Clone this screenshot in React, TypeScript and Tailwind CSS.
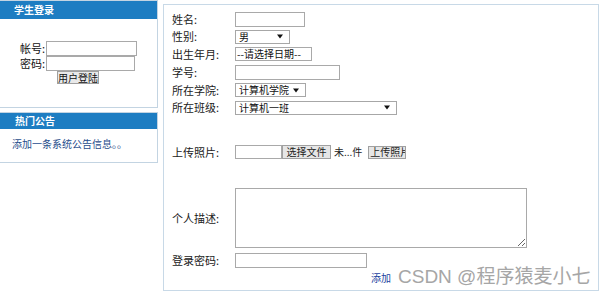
import React from "react";

const cjk = "font-['Noto_Sans_CJK_SC','Noto_Sans',sans-serif]";

const Arrow = () => (
  <svg width="6" height="5" viewBox="0 0 6 5" className="shrink-0">
    <path d="M0 0.5h6L3 4.5z" fill="#111" />
  </svg>
);

const FakeSelect = ({ text, w, h }: { text: string; w: string; h: string }) => (
  <div
    className={`${w} ${h} flex items-center justify-between border border-[#a7a7a7] bg-white pl-[3px] pr-[6px] text-[10px] leading-none text-[#111]`}
  >
    <span>{text}</span>
    <Arrow />
  </div>
);

const Row = ({
  label,
  h,
  children,
}: {
  label: string;
  h: string;
  children?: React.ReactNode;
}) => (
  <div className={`flex items-center ${h}`}>
    <div className="w-[63px] shrink-0 text-[11px] leading-none text-[#222]">{label}</div>
    {children}
  </div>
);

const LoginBox = () => (
  <div className="h-[108px] border-y border-r border-[#c3d4e2] bg-white">
    <div className="h-[18px] bg-[#1d7dc2] pl-[14px] text-[10px] font-bold leading-[18px] text-white">
      学生登录
    </div>
    <div className="flex flex-col pt-[22px]">
      <div className="flex h-[15px] items-center">
        <span className="w-[46px] pr-[1px] text-right text-[11px] leading-none">帐号:</span>
        <input className="h-[15px] w-[91px] border border-[#a9a9a9] bg-white" />
      </div>
      <div className="flex h-[15px] items-center">
        <span className="w-[46px] pr-[1px] text-right text-[11px] leading-none">密码:</span>
        <input type="password" className="h-[15px] w-[89px] border border-[#a9a9a9] bg-white" />
      </div>
      <div className="flex pl-[57px]">
        <button className="h-[13px] w-[42px] whitespace-nowrap border border-[#a0a0a0] bg-[#e9e9e9] px-0 text-[10px] leading-none">
          用户登陆
        </button>
      </div>
    </div>
  </div>
);

const NoticeBox = () => (
  <div className="mt-[4px] h-[51px] border-y border-r border-[#c3d4e2] bg-white">
    <div className="h-[16px] bg-[#1d7dc2] pl-[15px] text-[10px] font-bold leading-[16px] text-white">
      热门公告
    </div>
    <div className="pl-[12px] pt-[9px] text-[10px] leading-[12px] text-[#1f4d8c]">
      添加一条系统公告信息。。
    </div>
  </div>
);

const StudentForm = () => (
  <div className="ml-[5px] mt-[4px] flex h-[287px] w-[436px] flex-col border border-[#c8d9e7] pl-[8px] pt-[5px]">
    <Row label="姓名:" h="h-[18px]">
      <input className="h-[15px] w-[70px] border border-[#a9a9a9]" />
    </Row>
    <Row label="性别:" h="h-[17px]">
      <FakeSelect text="男" w="w-[55px]" h="h-[14px]" />
    </Row>
    <Row label="出生年月:" h="h-[18px]">
      <div className="flex h-[14px] w-[77px] items-center border border-[#a9a9a9] pl-[1px] text-[10px] leading-none text-[#111]">
        --请选择日期--
      </div>
    </Row>
    <Row label="学号:" h="h-[18px]">
      <input className="h-[15px] w-[105px] border border-[#a9a9a9]" />
    </Row>
    <Row label="所在学院:" h="h-[18px]">
      <FakeSelect text="计算机学院" w="w-[71px]" h="h-[14px]" />
    </Row>
    <Row label="所在班级:" h="h-[17px]">
      <FakeSelect text="计算机一班" w="w-[162px]" h="h-[14px]" />
    </Row>
    <Row label="上传照片:" h="h-[72px]">
      <div className="flex items-center text-[10px] leading-none">
        <div className="h-[14px] w-[47px] border border-[#a9a9a9] bg-white" />
        <button className="h-[14px] w-[49px] border border-[#a0a0a0] bg-[#e6e6e6] text-[10px] leading-none text-[#222]">
          选择文件
        </button>
        <span className="ml-[3px] text-[#222]">未...件</span>
        <button className="ml-[6px] h-[13px] w-[38px] overflow-hidden whitespace-nowrap border border-[#a0a0a0] bg-[#e6e6e6] pl-[1px] text-left text-[10px] leading-none text-[#222]">
          上传照片
        </button>
      </div>
    </Row>
    <Row label="个人描述:" h="h-[60px]">
      <textarea className="h-[60px] w-[292px] border border-[#a9a9a9]" />
    </Row>
    <Row label="登录密码:" h="h-[24px]">
      <input type="password" className="h-[15px] w-[132px] border border-[#a9a9a9]" />
    </Row>
    <div className="flex h-[11px] items-center justify-center pr-[8px] text-[10px] leading-none text-[#1b3f9e]">
      添加
    </div>
  </div>
);

export default function App() {
  return (
    <div className={`relative flex h-[296px] w-[605px] overflow-hidden bg-white text-[#111] ${cjk}`}>
      <div className="flex w-[158px] shrink-0 flex-col">
        <LoginBox />
        <NoticeBox />
      </div>
      <StudentForm />
      <div className="pointer-events-none absolute left-[398px] top-[265px] whitespace-nowrap font-['Liberation_Sans','Noto_Sans_CJK_SC',sans-serif] text-[19px] leading-[24px] text-[#a6a6a6]">
        CSDN @程序猿麦小七
      </div>
    </div>
  );
}
